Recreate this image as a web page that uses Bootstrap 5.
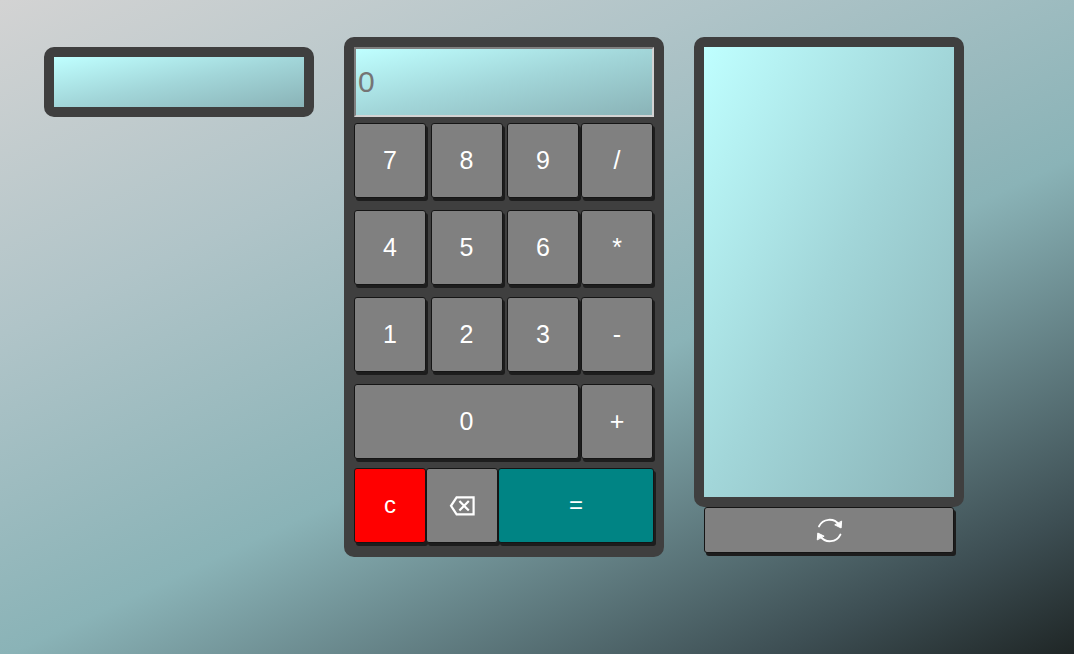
<!DOCTYPE html>
<html lang="en">
<head>
<meta charset="utf-8">
<meta name="viewport" content="width=device-width, initial-scale=1">
<title>Calculator</title>
<link rel="stylesheet" href="https://cdn.jsdelivr.net/npm/bootstrap@5.3.0/dist/css/bootstrap.min.css">
<style>
  body {
    font-family: "Liberation Sans", Arial, sans-serif;
    background: linear-gradient(155deg, #d3d3d3, #b0c4c8 29%, #8ab3b7 57%, #3d4e53 88%, #1f2626) no-repeat;
  }
  .workspace { padding: 37px 44px; gap: 30px; }
  .panel { border: 10px solid #3f3f3f; border-radius: 10px; }
  .glass { background: linear-gradient(to bottom right, #bfffff, #a2d6d9, #8ab3b7); }
  .side { width: 270px; }
  .memo { height: 70px; margin-top: 10px; }
  .history { height: 470px; }
  .calc { width: 320px; padding-bottom: 4px; background: #3f3f3f; }
  .screen {
    height: 70px;
    padding: 1px 2px;
    border: 2px solid;
    border-color: #808080 #d3d3d3 #d3d3d3 #808080;
    font-size: 30px;
    color: #757575;
    outline: 0;
  }
  .screen::placeholder { color: #757575; }
  .keys { gap: 12px; margin-top: 6px; }
  .key-row { gap: 2px; }
  .trio { width: 225px; }
  .key {
    width: 72px;
    height: 75px;
    padding: 0 0 2px;
    border: 1px solid #151515;
    border-radius: 3px;
    background: #808080;
    box-shadow: 2px 3px #1d1d1d;
    color: #fff;
    font-size: 25px;
    line-height: 30px;
  }
  .key-wide { width: 225px; }
  .key-clear { background: #f00; }
  .key-equals { width: 156px; background: #008484; }
  .key-icon { padding: 0; }
  .actions { margin-top: 9px; }
  .actions .key { font-size: 24px; }
  .key-reset { width: 250px; height: 46px; }
</style>
</head>
<body class="min-vh-100">
<main class="workspace d-flex flex-wrap align-items-start">
  <section class="panel glass side memo" aria-label="Memory"></section>

  <section class="panel calc" aria-label="Calculator">
    <input class="screen glass w-100 d-block" type="text" placeholder="0" aria-label="Result">
    <div class="keys d-flex flex-column">
      <div class="key-row d-flex">
        <div class="trio d-flex justify-content-between">
          <button type="button" class="key">7</button><button type="button" class="key">8</button><button type="button" class="key">9</button>
        </div>
        <button type="button" class="key">/</button>
      </div>
      <div class="key-row d-flex">
        <div class="trio d-flex justify-content-between">
          <button type="button" class="key">4</button><button type="button" class="key">5</button><button type="button" class="key">6</button>
        </div>
        <button type="button" class="key">*</button>
      </div>
      <div class="key-row d-flex">
        <div class="trio d-flex justify-content-between">
          <button type="button" class="key">1</button><button type="button" class="key">2</button><button type="button" class="key">3</button>
        </div>
        <button type="button" class="key">-</button>
      </div>
      <div class="key-row d-flex">
        <button type="button" class="key key-wide">0</button>
        <button type="button" class="key">+</button>
      </div>
    </div>
    <div class="actions d-flex">
      <button type="button" class="key key-clear">c</button>
      <button type="button" class="key key-icon d-flex align-items-center justify-content-center" aria-label="Backspace">
        <svg width="26" height="20" viewBox="0 0 26 20" fill="none" stroke="#fff" stroke-width="2.2"><path d="M7.600 1.300h17v17H7.600L2 9.800z"/><path d="M10.400 5l9.400 9.600M19.800 5l-9.400 9.600"/></svg>
      </button>
      <button type="button" class="key key-equals">=</button>
    </div>
  </section>

  <section class="d-flex flex-column align-items-center" aria-label="History">
    <div class="panel glass side history"></div>
    <button type="button" class="key key-icon key-reset d-flex align-items-center justify-content-center" aria-label="Reset">
      <svg width="28" height="28" viewBox="0 0 28 28" fill="none" stroke="#fff" stroke-width="1.900" stroke-linecap="round"><path d="M4 10.400A11.700 11.700 0 0 1 24 8.600M25.400 18.600A11.700 11.700 0 0 1 5.400 20.400"/><path d="M26.600 5.500l-.5 6.500-6-3zM2.300 23.500l.5-6.500 6 3z" fill="#fff" stroke-width="1" stroke-linejoin="round"/></svg>
    </button>
  </section>
</main>
<script src="https://cdn.jsdelivr.net/npm/bootstrap@5.3.0/dist/js/bootstrap.bundle.min.js"></script>
</body>
</html>
